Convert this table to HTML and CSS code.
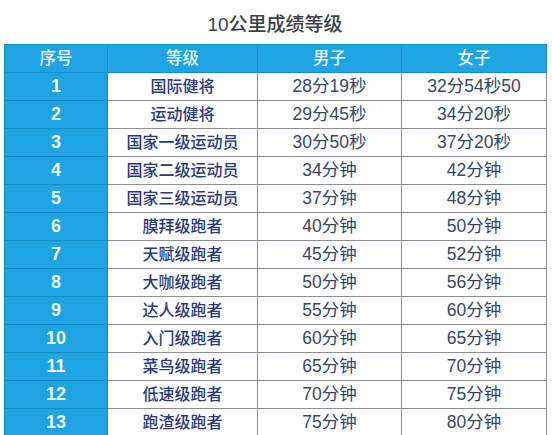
FILE: index.html
```html
<!DOCTYPE html>
<html lang="zh">
<head>
<meta charset="utf-8">
<link rel="stylesheet" href="styles.css">
</head>
<body>
<div class="page">
  <h1 class="title">10公里成绩等级</h1>
  <table class="grade">
    <colgroup>
      <col class="c1"><col class="c2"><col class="c3"><col class="c4">
    </colgroup>
    <thead>
      <tr><th>序号</th><th>等级</th><th>男子</th><th>女子</th></tr>
    </thead>
    <tbody>
      <tr><td class="no">1</td><td class="lv">国际健将</td><td>28分19秒</td><td>32分54秒50</td></tr>
      <tr><td class="no">2</td><td class="lv">运动健将</td><td>29分45秒</td><td>34分20秒</td></tr>
      <tr><td class="no">3</td><td class="lv">国家一级运动员</td><td>30分50秒</td><td>37分20秒</td></tr>
      <tr><td class="no">4</td><td class="lv">国家二级运动员</td><td>34分钟</td><td>42分钟</td></tr>
      <tr><td class="no">5</td><td class="lv">国家三级运动员</td><td>37分钟</td><td>48分钟</td></tr>
      <tr><td class="no">6</td><td class="lv">膜拜级跑者</td><td>40分钟</td><td>50分钟</td></tr>
      <tr><td class="no">7</td><td class="lv">天赋级跑者</td><td>45分钟</td><td>52分钟</td></tr>
      <tr><td class="no">8</td><td class="lv">大咖级跑者</td><td>50分钟</td><td>56分钟</td></tr>
      <tr><td class="no">9</td><td class="lv">达人级跑者</td><td>55分钟</td><td>60分钟</td></tr>
      <tr><td class="no">10</td><td class="lv">入门级跑者</td><td>60分钟</td><td>65分钟</td></tr>
      <tr><td class="no">11</td><td class="lv">菜鸟级跑者</td><td>65分钟</td><td>70分钟</td></tr>
      <tr><td class="no">12</td><td class="lv">低速级跑者</td><td>70分钟</td><td>75分钟</td></tr>
      <tr><td class="no">13</td><td class="lv">跑渣级跑者</td><td>75分钟</td><td>80分钟</td></tr>
    </tbody>
  </table>
</div>
</body>
</html>
```
FILE: styles.css
```css
html, body {
  margin: 0;
  padding: 0;
  background: #ffffff;
}
.page {
  padding: 0 6px 0 4px;
  font-family: "Liberation Sans", "Noto Sans CJK SC", sans-serif;
}
.title {
  margin: 0;
  height: 44px;
  line-height: 49px;
  text-align: center;
  font-size: 19px;
  font-weight: 500;
  color: #3a3f4a;
}
.grade {
  width: 542px;
  border-collapse: collapse;
  table-layout: fixed;
}
.c1 { width: 103px; }
.c2 { width: 150px; }
.c3 { width: 144px; }
.c4 { width: 145px; }
.grade th, .grade td {
  height: 27px;
  padding: 0;
  text-align: center;
  font-size: 17.5px;
  line-height: 27px;
  border: 1px solid #8a8f9a;
}
.grade th {
  background: #1ea3e3;
  color: #e3f4ff;
  font-weight: 500;
  font-size: 16.5px;
  border-color: #1a8cc8;
}
.grade td {
  color: #3a4762;
  font-weight: 400;
}
.grade td.no {
  background: #1ea3e3;
  color: #eef9ff;
  font-weight: 700;
  font-size: 18px;
  border-color: #1a88c2;
}
.grade td.lv {
  color: #2c3a78;
  font-weight: 500;
  font-size: 16px;
}
```
